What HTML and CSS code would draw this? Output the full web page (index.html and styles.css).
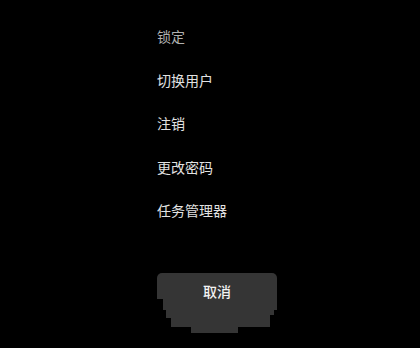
FILE: index.html
```html
<!DOCTYPE html>
<html lang="zh-CN">

<head>
    <meta charset="UTF-8">
    <meta name="viewport" content="width=device-width, initial-scale=1.0">
    <title>安全选项</title>
    <link rel="stylesheet" href="styles.css">
</head>

<body>
    <div class="screen">
        <ul class="options">
            <li class="option option-dim">锁定</li>
            <li class="option">切换用户</li>
            <li class="option">注销</li>
            <li class="option">更改密码</li>
            <li class="option">任务管理器</li>
        </ul>
        <div class="cancel">取消</div>
    </div>
</body>

</html>
```

FILE: styles.css
```css
html,
body {
    margin: 0;
    padding: 0;
    background-color: #000;
}

body {
    font-family: "Noto Sans CJK SC", "Noto Sans", sans-serif;
    width: 420px;
    height: 348px;
    overflow: hidden;
}

.screen {
    display: flex;
    flex-direction: column;
    padding: 26px 0 0 157px;
}

.options {
    list-style: none;
    margin: 0;
    padding: 0;
    display: flex;
    flex-direction: column;
    gap: 23.5px;
}

.option {
    font-size: 14px;
    line-height: 20px;
    color: #e2e2e2;
}

.option-dim {
    color: #b0b0b0;
}

.cancel {
    margin-top: 53px;
    width: 120px;
    height: 60px;
    box-sizing: border-box;
    padding-top: 8px;
    background-color: #353535;
    border-radius: 5px 5px 0 0;
    color: #f2f2f2;
    font-size: 14px;
    font-weight: 500;
    line-height: 20px;
    text-align: center;
    /* 底边是参差的 */
    clip-path: polygon(0 0, 120px 0, 120px 37px, 117px 37px, 117px 42px, 113px 42px, 113px 54px, 81px 54px, 81px 60px, 34px 60px, 34px 54px, 14px 54px, 14px 45px, 9px 45px, 9px 37px, 6px 37px, 6px 26px, 0 26px);
}
```
